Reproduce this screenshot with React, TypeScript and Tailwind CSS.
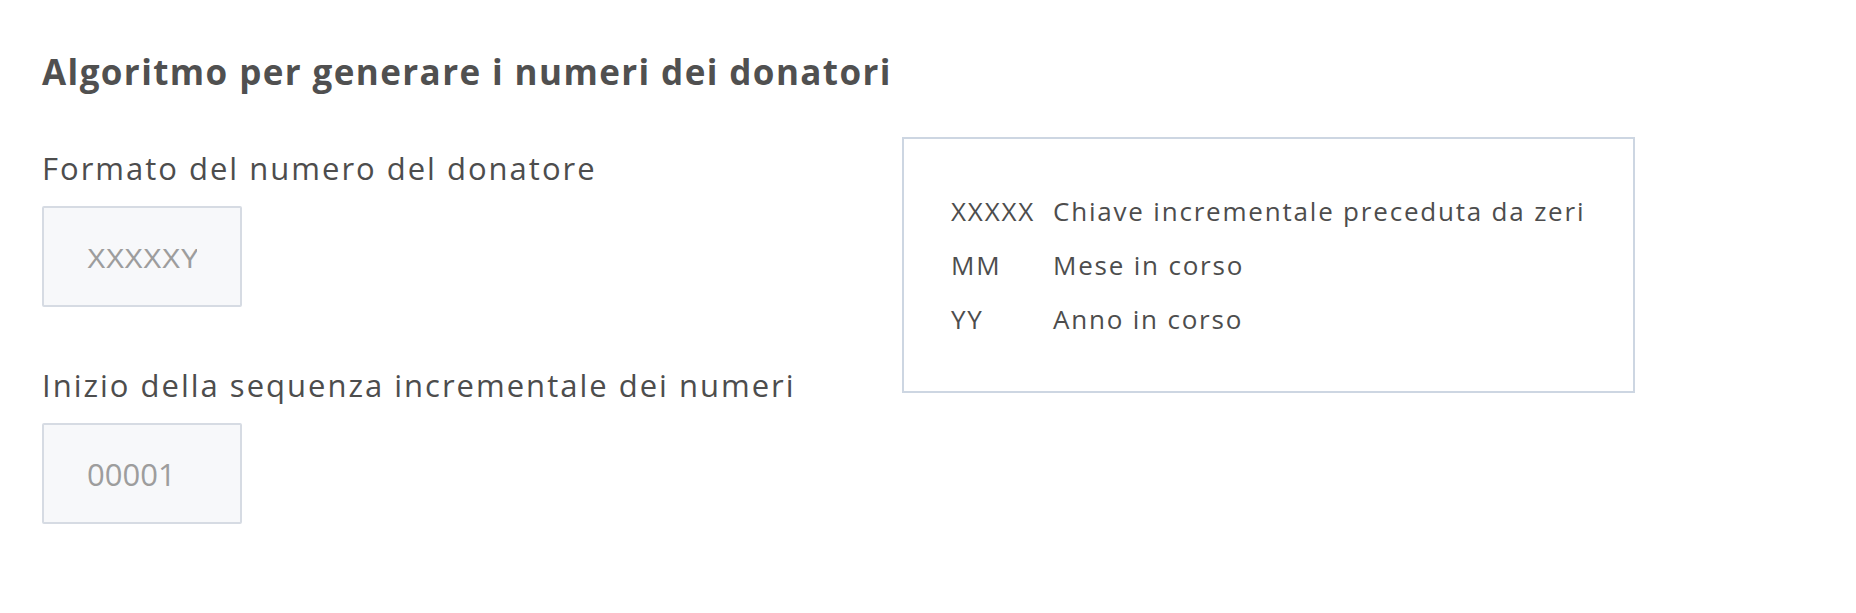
import React from "react";

const rows: [string, string][] = [
  ["XXXXX", "Chiave incrementale preceduta da zeri"],
  ["MM", "Mese in corso"],
  ["YY", "Anno in corso"],
];

const App = (): React.JSX.Element => {
  return (
    <section className="min-h-screen w-full bg-white pl-[42px] pt-[48px] font-['Open_Sans',sans-serif] text-[#4d4d4d]">
      <h2 className="text-[35px] leading-[48px] font-bold tracking-[1.4px] text-[#505050]">
        Algoritmo per generare i numeri dei donatori
      </h2>

      <div className="mt-[41px] flex items-start">
        <div className="w-[860px] shrink-0 pt-[11px]">
          <label className="block text-[31px] leading-[40px] tracking-[2px]">
            Formato del numero del donatore
          </label>
          <input
            type="text"
            placeholder="XXXXXYYMM"
            className="mt-[18px] block h-[101px] w-[200px] rounded-[2px] border-2 border-[#d6dbe3] bg-[#f7f8fa] px-[43px] pt-[4px] font-['Liberation_Sans',sans-serif] text-[28px] text-[#555] placeholder:text-[#9d9d9d] outline-none"
          />

          <label className="mt-[58px] block text-[31px] leading-[40px] tracking-[2px]">
            Inizio della sequenza incrementale dei numeri
          </label>
          <input
            type="text"
            placeholder="00001"
            className="mt-[18px] block h-[101px] w-[200px] rounded-[2px] border-2 border-[#d6dbe3] bg-[#f7f8fa] px-[43px] text-[31px] text-[#555] placeholder:text-[#9d9d9d] outline-none"
          />
        </div>

        <div className="h-[256px] w-[733px] shrink-0 border-2 border-[#cdd6e2] px-[47px] pt-[45px]">
          <div className="grid grid-cols-[102px_auto] text-[26px] leading-[54px] tracking-[1.8px]">
            {rows.map(([code, text]) => (
              <React.Fragment key={code}>
                <span>{code}</span>
                <span>{text}</span>
              </React.Fragment>
            ))}
          </div>
        </div>
      </div>
    </section>
  );
};

export default App;
